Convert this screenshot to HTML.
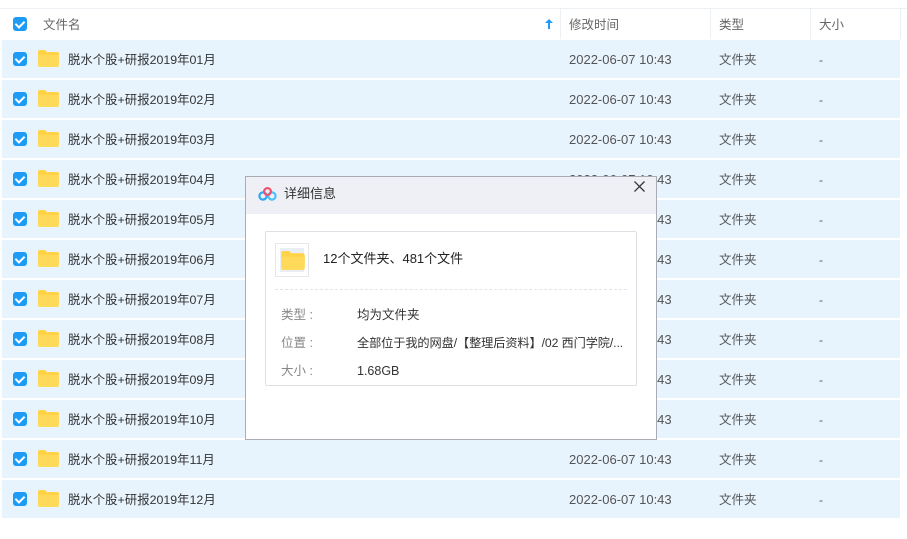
<!DOCTYPE html>
<html><head><meta charset="utf-8"><style>
*{margin:0;padding:0;box-sizing:border-box}
body{width:907px;height:539px;background:#fff;font-family:"Liberation Sans","Noto Sans CJK SC",sans-serif;position:relative;overflow:hidden;font-size:12px;color:#333}
.hl{position:absolute;left:0;top:8px;width:907px;height:1px;background:#eceff3}
.hdr{position:absolute;left:0;top:9px;width:907px;height:30px;color:#666;font-size:12.5px}
.hdr span{position:absolute;top:2px;line-height:29px}
.sep{position:absolute;top:0;width:1px;height:30px;background:#eceff3}
.cb{position:absolute;width:14px;height:14px;border-radius:3px;background:#1e9cf5}
.cb:after{content:"";position:absolute;left:4px;top:1.5px;width:4px;height:7px;border:solid #fff;border-width:0 2px 2px 0;transform:rotate(45deg)}
.row{position:absolute;left:2px;width:898px;height:38px;background:#e8f4fd}
.row span{position:absolute;top:1px;line-height:38px;height:38px;white-space:nowrap}
.fold{position:absolute;left:36px;top:10px;width:21px;height:17px}
.dlg{position:absolute;left:245px;top:176px;width:412px;height:264px;background:#fff;border:1px solid #a9acb3}
.tb{height:37px;background:#eef0f5;position:relative}
.box{position:absolute;left:19px;top:54px;width:372px;height:155px;border:1px solid #dcdfe4;border-radius:2px}
.lbl,.val{position:absolute;line-height:20px;white-space:nowrap;font-size:12.5px}
.lbl{left:15px;color:#888}
.val{left:91px;color:#333}
</style></head><body>
<div class="hl"></div>
<div class="hdr">
<div class="cb" style="left:13px;top:8px"></div>
<span style="left:43px">文件名</span>
<svg style="position:absolute;left:545px;top:10px" width="8" height="10" viewBox="0 0 8 10"><path d="M4 0L0 4h3v6h2V4h3z" fill="#1e9cf5"/></svg>
<div class="sep" style="left:560px"></div><span style="left:569px">修改时间</span>
<div class="sep" style="left:710px"></div><span style="left:719px">类型</span>
<div class="sep" style="left:810px"></div><span style="left:819px">大小</span>
<div class="sep" style="left:900px"></div>
</div>
<div id="rows"></div>
<script>
var h='';for(var i=0;i<12;i++){var m=(i+1<10?'0':'')+(i+1);h+='<div class="row" style="top:'+(40+i*40)+'px"><div class="cb" style="left:11px;top:12px"></div><svg class="fold" viewBox="0 0 21 17"><path d="M0 2a2 2 0 0 1 2-2h5l2 2h10a2 2 0 0 1 2 2v11a2 2 0 0 1-2 2H2a2 2 0 0 1-2-2z" fill="#ffd247"/><path d="M0 5h21v10a2 2 0 0 1-2 2H2a2 2 0 0 1-2-2z" fill="#ffda5a"/></svg><span style="left:66px;color:#333;font-size:12.4px">脱水个股+研报2019年'+m+'月</span><span style="left:567px;color:#555;font-size:13px">2022-06-07 10:43</span><span style="left:717px;color:#555;font-size:12.5px">文件夹</span><span style="left:817px;color:#555">-</span></div>'}
document.getElementById('rows').innerHTML=h;
</script>
<div class="dlg">
<div class="tb">
<svg style="position:absolute;left:12px;top:10px" width="19" height="14" viewBox="0 0 19 14"><circle cx="5" cy="9" r="3.6" fill="none" stroke="#2ea8f0" stroke-width="2.2"/><circle cx="14" cy="9" r="3.6" fill="none" stroke="#4fc0f5" stroke-width="2.2"/><circle cx="9.5" cy="4.5" r="3.4" fill="none" stroke="#f0506e" stroke-width="2.2"/></svg>
<span style="position:absolute;left:38px;top:0;line-height:34px;font-size:13px;color:#333">详细信息</span>
<svg style="position:absolute;left:388px;top:4px" width="11" height="11" viewBox="0 0 11 11"><path d="M0.5 0.5L10.5 10.5M10.5 0.5L0.5 10.5" stroke="#333" stroke-width="1.3"/></svg>
</div>
<div class="box">
<div style="position:absolute;left:9px;top:11px;width:34px;height:34px;border:1px solid #e4e6ea;background:#fff"><div style="position:absolute;left:4px;top:4px;width:24px;height:24px;background:#e8eef3"></div><svg style="position:absolute;left:5px;top:7px" width="24" height="19" viewBox="0 0 21 17"><path d="M0 2a2 2 0 0 1 2-2h5l2 2h10a2 2 0 0 1 2 2v11a2 2 0 0 1-2 2H2a2 2 0 0 1-2-2z" fill="#ffd247"/><path d="M0 5h21v10a2 2 0 0 1-2 2H2a2 2 0 0 1-2-2z" fill="#ffda5a"/></svg></div>
<span style="position:absolute;left:57px;top:17px;line-height:20px;font-size:13px;color:#222">12个文件夹、481个文件</span>
<div style="position:absolute;left:9px;top:57px;width:352px;border-top:1px dashed #e2e4e8"></div>
<span class="lbl" style="top:73px">类型 :</span><span class="val" style="top:73px">均为文件夹</span>
<span class="lbl" style="top:101px">位置 :</span><span class="val" style="top:101px;font-size:12.2px;letter-spacing:-0.1px">全部位于我的网盘/【整理后资料】/02 西门学院/...</span>
<span class="lbl" style="top:129px">大小 :</span><span class="val" style="top:129px">1.68GB</span>
</div>
</div>
</body></html>
